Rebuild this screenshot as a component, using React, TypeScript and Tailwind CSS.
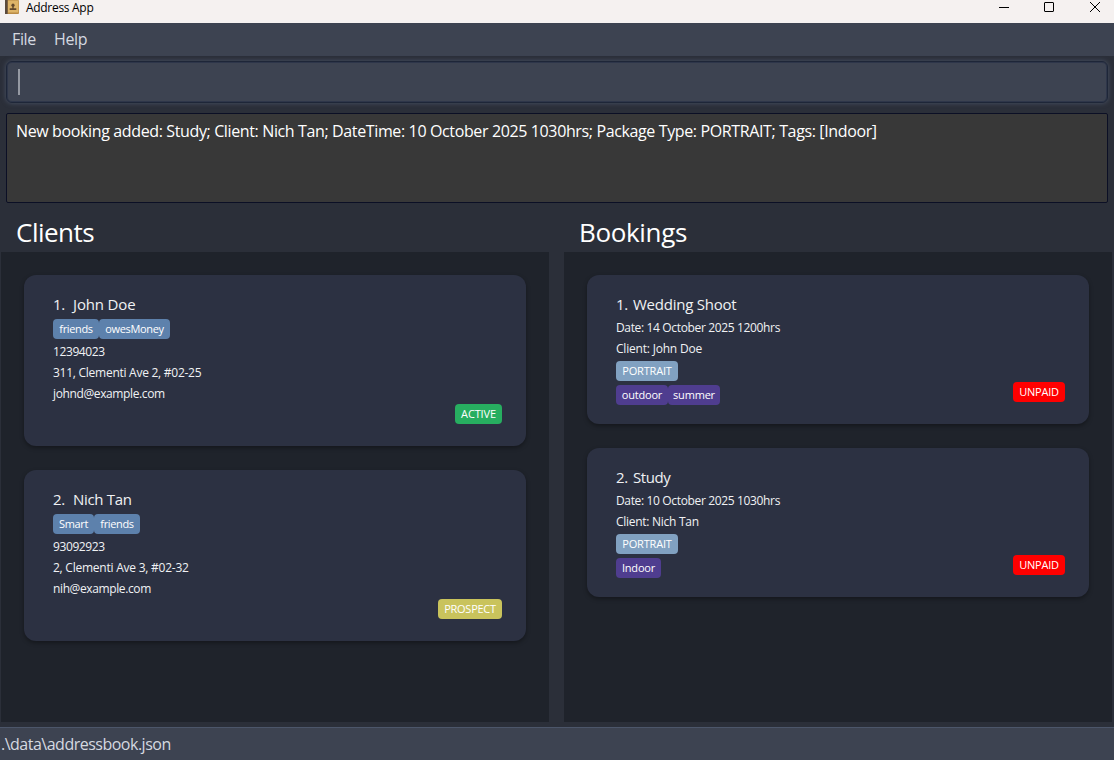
type Text = { text: string; cls: string };

function Chip({ text, cls }: Text) {
  return (
    <span className={`flex h-5 items-center justify-center whitespace-nowrap rounded-[4px] text-[11px] text-white ${cls}`}>
      {text}
    </span>
  );
}

const line = "flex h-[21px] shrink-0 items-center whitespace-nowrap text-[12px] text-[#f0f1f4]";

function Card({ n, name, before, chips, after, status, cls }: {
  n: string; name: Text; before: Text[]; chips: Text[][]; after: Text[]; status: Text; cls: string;
}) {
  return (
    <div className={`flex w-[502px] justify-between rounded-[12px] bg-[#2c3142] pl-[29px] pr-6 pt-[18px] shadow-[0_2px_4px_rgba(0,0,0,0.35)] ${cls}`}>
      <div className="flex flex-col">
        <div className="mb-[2px] flex h-[22px] shrink-0 items-center whitespace-nowrap text-[15px] text-[#f0f1f4]">
          <span className={before.length ? "w-[17px] tracking-[-0.3px]" : "w-5 tracking-[-0.3px]"}>{n}</span>
          <span className={name.cls}>{name.text}</span>
        </div>
        {before.map((t) => (
          <div key={t.text} className={`${line} ${t.cls}`}>{t.text}</div>
        ))}
        <div className="flex shrink-0 flex-col gap-1 py-[2px]">
          {chips.map((row, i) => (
            <div key={i} className="flex">
              {row.map((c) => <Chip key={c.text} {...c} />)}
            </div>
          ))}
        </div>
        {after.map((t) => (
          <div key={t.text} className={`${line} ${t.cls}`}>{t.text}</div>
        ))}
      </div>
      <div className="flex items-end pb-[22px]"><Chip {...status} /></div>
    </div>
  );
}

const blue = "bg-[#5d81ac] tracking-[-0.35px]";
const purple = "bg-[#4f3d8f] tracking-[-0.2px]";
const portrait = "w-[62px] bg-[#81a1c1] tracking-[-0.2px]";
const unpaid = "w-[52px] bg-[#ff0000] tracking-[-0.2px]";

export default function App() {
  return (
    <div className="flex h-[760px] w-[1114px] flex-col overflow-hidden bg-[#2b2f39] font-['Open_Sans','Noto_Sans',sans-serif]">
      <header className="flex h-[23px] shrink-0 items-start justify-between bg-[#f5f1f0] text-black">
        <div className="flex h-4 items-center pl-[5px]">
          <svg width="15" height="15" viewBox="0 0 15 15" className="-mt-[2px]">
            <rect x="0" y="0" width="14" height="14" rx="1" fill="#b98a45" />
            <rect x="0" y="0" width="2.6" height="14" fill="#5b4a3c" />
            <rect x="3" y="0.5" width="10.4" height="12" fill="#deb468" />
            <circle cx="8" cy="5.2" r="1.6" fill="#62482c" />
            <path d="M7.3 6h1.4v2.2h2.6V10H4.7V8.2h2.6z" fill="#62482c" />
          </svg>
          <span className="ml-[6px] whitespace-nowrap text-[12px] tracking-[-0.3px]">Address App</span>
        </div>
        <svg width="116" height="16" viewBox="0 0 116 16" fill="none" stroke="#000">
          <path d="M1 7.5h10" />
          <rect x="46.5" y="2.5" width="9" height="9" rx="0.5" />
          <path d="M92 2l10 10M102 2L92 12" />
        </svg>
      </header>
      <nav className="flex h-[33px] shrink-0 items-center bg-[#3d4351] pb-px pl-3 text-[16px] tracking-[-0.35px] text-[#d5d9e0]">
        <span className="w-[42px]">File</span>
        <span>Help</span>
      </nav>
      <div className="mx-[6px] mt-[5px] flex h-[42px] shrink-0 items-center rounded-[6px] border border-[#1e2638] bg-[#3d4351] pl-[11px] shadow-[0_0_5px_#4a5468,inset_0_0_0_1px_#2e364a]">
        <div className="h-[26px] w-[2px] bg-[#9599a2]" />
      </div>
      <div className="mx-[6px] mt-[10px] h-[90px] shrink-0 whitespace-nowrap rounded-[2px] border border-[#0b0f25] bg-[#383838] pl-[9px] pt-[6px] text-[16px] leading-[22px] tracking-[-0.37px] text-white">
        New booking added: Study; Client: Nich Tan; DateTime: 10 October 2025 1030hrs; Package Type: PORTRAIT; Tags: [Indoor]
      </div>
      <div className="flex h-[49px] shrink-0 items-center pl-4 pt-[10px] text-[26px] text-white">
        <h1 className="w-[563px] tracking-[-0.5px]">Clients</h1>
        <h1 className="tracking-[-0.35px]">Bookings</h1>
      </div>
      <main className="flex h-[470px] shrink-0 gap-[15px] px-px">
        <section className="flex w-[548px] flex-col gap-6 bg-[#1f232b] pl-[23px] pt-[23px]">
          <Card n="1." name={{ text: "John Doe", cls: "tracking-[-0.15px]" }} before={[]} cls="h-[171px]"
            chips={[[{ text: "friends", cls: `w-[46px] ${blue}` }, { text: "owesMoney", cls: `w-[71px] ${blue}` }]]}
            after={[
              { text: "12394023", cls: "tracking-[-0.4px]" },
              { text: "311, Clementi Ave 2, #02-25", cls: "tracking-[-0.26px]" },
              { text: "johnd@example.com", cls: "tracking-[-0.38px]" },
            ]}
            status={{ text: "ACTIVE", cls: "w-[47px] bg-[#27ae60] tracking-[-0.15px]" }} />
          <Card n="2." name={{ text: "Nich Tan", cls: "tracking-[-0.3px]" }} before={[]} cls="h-[171px]"
            chips={[[{ text: "Smart", cls: `w-[41px] ${blue}` }, { text: "friends", cls: `w-[46px] ${blue}` }]]}
            after={[
              { text: "93092923", cls: "tracking-[-0.4px]" },
              { text: "2, Clementi Ave 3, #02-32", cls: "tracking-[-0.24px]" },
              { text: "nih@example.com", cls: "tracking-[-0.38px]" },
            ]}
            status={{ text: "PROSPECT", cls: "w-16 bg-[#c9c35c] tracking-[-0.25px]" }} />
        </section>
        <section className="flex w-[548px] flex-col gap-6 bg-[#1f232b] pl-[23px] pt-[23px]">
          <Card n="1." name={{ text: "Wedding Shoot", cls: "tracking-[-0.24px]" }} cls="h-[149px]"
            before={[
              { text: "Date: 14 October 2025 1200hrs", cls: "tracking-[-0.35px]" },
              { text: "Client: John Doe", cls: "tracking-[-0.2px]" },
            ]}
            chips={[[{ text: "PORTRAIT", cls: portrait }], [{ text: "outdoor", cls: `w-[52px] ${purple}` }, { text: "summer", cls: `w-[52px] ${purple}` }]]}
            after={[]} status={{ text: "UNPAID", cls: unpaid }} />
          <Card n="2." name={{ text: "Study", cls: "tracking-[-0.4px]" }} cls="h-[149px]"
            before={[
              { text: "Date: 10 October 2025 1030hrs", cls: "tracking-[-0.35px]" },
              { text: "Client: Nich Tan", cls: "tracking-[-0.28px]" },
            ]}
            chips={[[{ text: "PORTRAIT", cls: portrait }], [{ text: "Indoor", cls: `w-[45px] ${purple}` }]]}
            after={[]} status={{ text: "UNPAID", cls: unpaid }} />
        </section>
      </main>
      <footer className="mt-[5px] flex h-[33px] shrink-0 items-center border-t border-[#4c566a] bg-[#3d4351] pl-px text-[16px] tracking-[-0.5px] text-[#d5d9e0]">
        .\data\addressbook.json
      </footer>
    </div>
  );
}
